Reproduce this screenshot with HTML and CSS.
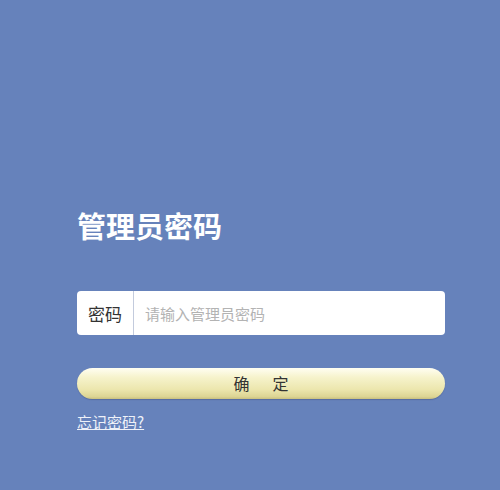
FILE: index.html
```html
<!DOCTYPE html>
<html lang="zh-CN">
<head>
<meta charset="utf-8">
<title>管理员密码</title>
<link rel="stylesheet" href="styles.css">
</head>
<body>
<div class="page">
  <h1 class="title">管理员密码</h1>
  <div class="field">
    <label class="field-label" for="pwd">密码</label>
    <input class="field-input" id="pwd" type="password" placeholder="请输入管理员密码">
  </div>
  <button class="submit" type="button">确定</button>
  <a class="forgot" href="#">忘记密码?</a>
</div>
</body>
</html>
```
FILE: styles.css
```css
html, body {
  margin: 0;
  padding: 0;
}
body {
  background: #6682bb;
  width: 500px;
  height: 490px;
  overflow: hidden;
  font-family: "Noto Sans CJK SC", "Noto Sans", sans-serif;
}
.page {
  display: flex;
  flex-direction: column;
  align-items: flex-start;
  padding: 211px 0 0 77px;
  width: 368px;
}
.title {
  margin: 0;
  font-size: 29px;
  line-height: 29px;
  font-weight: 700;
  color: #ffffff;
  letter-spacing: 0;
}
.field {
  margin-top: 51px;
  display: flex;
  width: 368px;
  height: 44px;
  background: #ffffff;
  border-radius: 4px;
  overflow: hidden;
}
.field-label {
  width: 56px;
  flex: none;
  display: flex;
  align-items: center;
  justify-content: center;
  font-size: 17px;
  color: #333333;
  border-right: 1px solid #c3cbdd;
}
.field-input {
  flex: 1;
  border: 0;
  outline: none;
  padding: 0 0 0 11px;
  font-family: inherit;
  font-size: 15px;
  color: #333333;
  background: transparent;
}
.field-input::placeholder {
  color: #b3b3b3;
}
.submit {
  margin-top: 33px;
  width: 368px;
  height: 31px;
  border: 0;
  border-radius: 16px;
  padding: 0 0 0 23px;
  background: linear-gradient(to bottom, #fffef2 0%, #f6f3cc 30%, #ece6ad 70%, #ddd594 92%, #c9c080 100%);
  box-shadow: 0 1px 1px rgba(60, 70, 110, 0.35);
  font-family: inherit;
  font-size: 16px;
  line-height: 31px;
  letter-spacing: 23px;
  color: #333333;
  cursor: pointer;
}
.forgot {
  margin-top: 15px;
  font-size: 15px;
  line-height: 15px;
  color: #eef1f8;
  text-decoration: underline;
}
```
